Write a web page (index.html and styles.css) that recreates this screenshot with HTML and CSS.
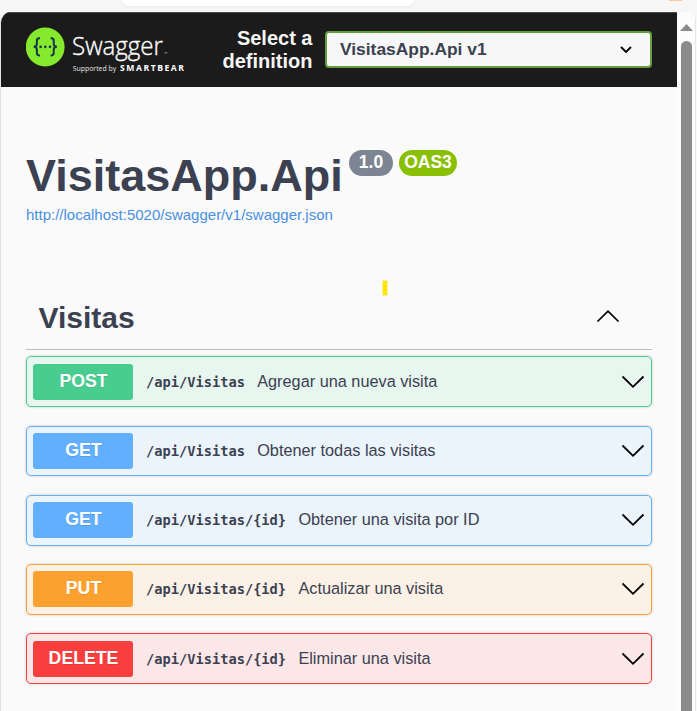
FILE: index.html
```html
<!DOCTYPE html>
<html lang="es">
<head>
<meta charset="utf-8">
<title>Swagger UI</title>
<link rel="stylesheet" href="styles.css">
</head>
<body>
<div class="chrome"><div class="address"></div><div class="ext"></div></div>
<div class="window">
  <div class="page">
    <header class="topbar">
      <svg class="logo" width="160" height="50" viewBox="26 27 160 50">
        <circle cx="45.2" cy="47" r="19.4" fill="#85ea2d"/>
        <g fill="none" stroke="#173647" stroke-width="2">
          <path d="M40 38.2h-.8q-2.3 0-2.3 2.3v3.2q0 3.1-3.2 3.1 3.2 0 3.2 3.1v3.2q0 2.3 2.3 2.3h.8"/>
          <path d="M50.6 38.2h.8q2.3 0 2.3 2.3v3.2q0 3.1 3.2 3.1-3.2 0-3.2 3.1v3.2q0 2.3-2.3 2.3h-.8"/>
        </g>
        <g fill="#173647"><circle cx="40.6" cy="46.8" r="1.35"/><circle cx="45.3" cy="46.8" r="1.35"/><circle cx="50" cy="46.8" r="1.35"/></g>
        <text class="brand" x="72" y="54.8" textLength="91" lengthAdjust="spacingAndGlyphs">Swagger</text>
        <text class="tm" x="164.200" y="54.500">™</text>
        <text class="by" x="72.7" y="71" textLength="43.5" lengthAdjust="spacingAndGlyphs">Supported by</text>
        <text class="smart" x="120" y="70.5" textLength="64" lengthAdjust="spacing">SMARTBEAR</text>
      </svg>
      <div class="select-label">Select a definition</div>
      <div class="select"><span>VisitasApp.Api v1</span>
        <svg width="12" height="8" viewBox="0 0 12 8"><path d="M1 1l5 5 5-5" fill="none" stroke="#000" stroke-width="1.8"/></svg>
      </div>
    </header>
    <main class="content">
      <div class="title"><h1>VisitasApp.Api</h1><span class="badge version">1.0</span><span class="badge oas">OAS3</span></div>
      <a class="spec">http://localhost:5020/swagger/v1/swagger.json</a>
      <div class="tag"><h2>Visitas</h2>
        <svg width="24" height="14" viewBox="0 0 24 14"><path d="M1.5 12.5L12 2.2l10.500 10.300" fill="none" stroke="#000" stroke-width="1.7"/></svg>
      </div>
      <div class="ops">
        <div class="op post"><b class="method">POST</b><code>/api/Visitas</code><span class="desc">Agregar una nueva visita</span><svg class="down" width="24" height="14" viewBox="0 0 24 14"><path d="M1.500 1.500L12 11.800l10.500-10.300"/></svg></div>
        <div class="op get"><b class="method">GET</b><code>/api/Visitas</code><span class="desc">Obtener todas las visitas</span><svg class="down" width="24" height="14" viewBox="0 0 24 14"><path d="M1.500 1.500L12 11.800l10.500-10.300"/></svg></div>
        <div class="op get"><b class="method">GET</b><code>/api/Visitas/{id}</code><span class="desc">Obtener una visita por ID</span><svg class="down" width="24" height="14" viewBox="0 0 24 14"><path d="M1.500 1.500L12 11.800l10.500-10.300"/></svg></div>
        <div class="op put"><b class="method">PUT</b><code>/api/Visitas/{id}</code><span class="desc">Actualizar una visita</span><svg class="down" width="24" height="14" viewBox="0 0 24 14"><path d="M1.500 1.500L12 11.800l10.500-10.300"/></svg></div>
        <div class="op delete"><b class="method">DELETE</b><code>/api/Visitas/{id}</code><span class="desc">Eliminar una visita</span><svg class="down" width="24" height="14" viewBox="0 0 24 14"><path d="M1.500 1.500L12 11.800l10.500-10.300"/></svg></div>
      </div>
    </main>
  </div>
  <div class="scrollbar"><div class="arrow"></div><div class="thumb"></div></div>
</div>
<div class="marker"></div>
</body>
</html>
```
FILE: styles.css
```css
* { box-sizing: border-box; }
body {
  margin: 0;
  width: 697px;
  height: 711px;
  overflow: hidden;
  background: #f6f6f6;
  color: #3b4151;
  font-family: "Liberation Sans", Arial, sans-serif;
}
.chrome { display: flex; justify-content: space-between; height: 12px; padding: 0 15px 0 122px; }
.address { width: 292px; height: 6px; background: #fff; border-radius: 0 0 14px 14px; box-shadow: 0 1px 2px #e8e8e8; }
.ext { width: 13px; height: 1px; background: #fcc9a0; }
.window {
  display: flex;
  height: 699px;
  border-left: 1px solid #e3e3e3;
  border-radius: 11px 11px 0 0;
  overflow: hidden;
  background: #fafafa;
}
.page { width: 676px; }
.topbar {
  display: flex;
  height: 75px;
  padding: 15px 25px 0;
  background: #1b1b1b;
  border-top: 1px solid #4a4a4a;
}
.logo { flex: none; margin-top: -1px; }
.brand { font: 300 26px "Open Sans", sans-serif; fill: #fff; stroke: #fff; stroke-width: .35px; }
.tm { font: 4px "Open Sans", sans-serif; fill: #ccc; }
.by { font: 7.3px "Open Sans", sans-serif; fill: #e4e4e4; }
.smart { font: 700 8.6px "Open Sans", sans-serif; fill: #fff; }
.select-label {
  width: 126.500px;
  margin-top: -1px;
  padding-left: 29px;
  color: #f5f5f5;
  font-size: 20px;
  font-weight: 700;
  line-height: 23px;
  text-align: right;
}
.select {
  display: flex;
  align-items: center;
  justify-content: space-between;
  width: 327px;
  height: 37px;
  margin: 3px 0 0 12.500px;
  padding: 0 18px 0 13px;
  border: 2px solid #62a03f;
  border-radius: 4px;
  background: #f7f7f7;
  font-size: 17.400px;
  font-weight: 700;
}
.select span { margin-top: -1px; }
.content { padding: 62px 25px 0; }
.title { display: flex; align-items: flex-start; height: 57px; }
h1 { margin: 0; width: 317px; font-size: 45px; line-height: 54px; white-space: nowrap; }
.badge {
  height: 26px;
  margin-top: 1px;
  border-radius: 13px;
  color: #fff;
  font-size: 17.500px;
  font-weight: 700;
  line-height: 24px;
  text-align: center;
}
.version { width: 44px; margin-left: 6px; background: #7d8492; }
.oas { width: 58px; margin-left: 6px; background: #89bf04; }
.spec { display: block; height: 18px; color: #4990e2; font-size: 15px; line-height: 18px; }
.tag {
  display: flex;
  align-items: center;
  justify-content: space-between;
  height: 64px;
  margin-top: 62px;
  padding: 0 32.500px 0 12.500px;
  border-bottom: 1px solid #bcbec2;
}
h2 { margin: 0; font-size: 30px; line-height: 36px; }
.tag svg { margin-top: -3px; }
.ops { display: flex; flex-direction: column; gap: 18.650px; padding-top: 6.450px; }
.op {
  display: flex;
  align-items: flex-start;
  height: 50.600px;
  padding: 6.350px 6px 0;
  border: 1px solid;
  border-radius: 5px;
  box-shadow: 0 0 3px rgba(0,0,0,.19);
}
.method {
  width: 100px;
  height: 36px;
  padding-left: 1px;
  border-radius: 3px;
  color: #fff;
  font-size: 17.700px;
  line-height: 34px;
  text-align: center;
  text-shadow: 0 1px 0 rgba(0,0,0,.1);
}
code { margin: 0 12.300px 0 13px; font: 700 13.700px/37px "DejaVu Sans Mono", monospace; }
.desc { font-size: 16.300px; line-height: 35.400px; white-space: nowrap; }
.down { margin: 11px 0 0 auto; fill: none; stroke: #000; stroke-width: 1.8; }
.post { border-color: #49cc90; background: #e8f6f0; }
.post .method { background: #49cc90; }
.get { border-color: #61affe; background: #ebf3fb; }
.get .method { background: #61affe; }
.put { border-color: #fca130; background: #fbf1e6; }
.put .method { background: #fca130; }
.delete { border-color: #f93e3e; background: #fbe7e7; }
.delete .method { background: #f93e3e; }
.scrollbar { display: flex; flex-direction: column; width: 19px; padding-left: 3px; background: #fcfcfc; border-right: 1px solid #e6e6e6; }
.arrow { width: 13px; height: 7px; margin-top: 12px; background: #8b8b8b; clip-path: polygon(50% 0, 100% 100%, 0 100%); }
.thumb { flex: 1; width: 11px; margin: 10px 0 0 1px; border-radius: 6px 6px 0 0; background: #8b8b8b; }
.marker { position: absolute; left: 383px; top: 281px; width: 4px; height: 14px; background: #ffe600; box-shadow: 0 0 0 1px #fff3a0; }
```
